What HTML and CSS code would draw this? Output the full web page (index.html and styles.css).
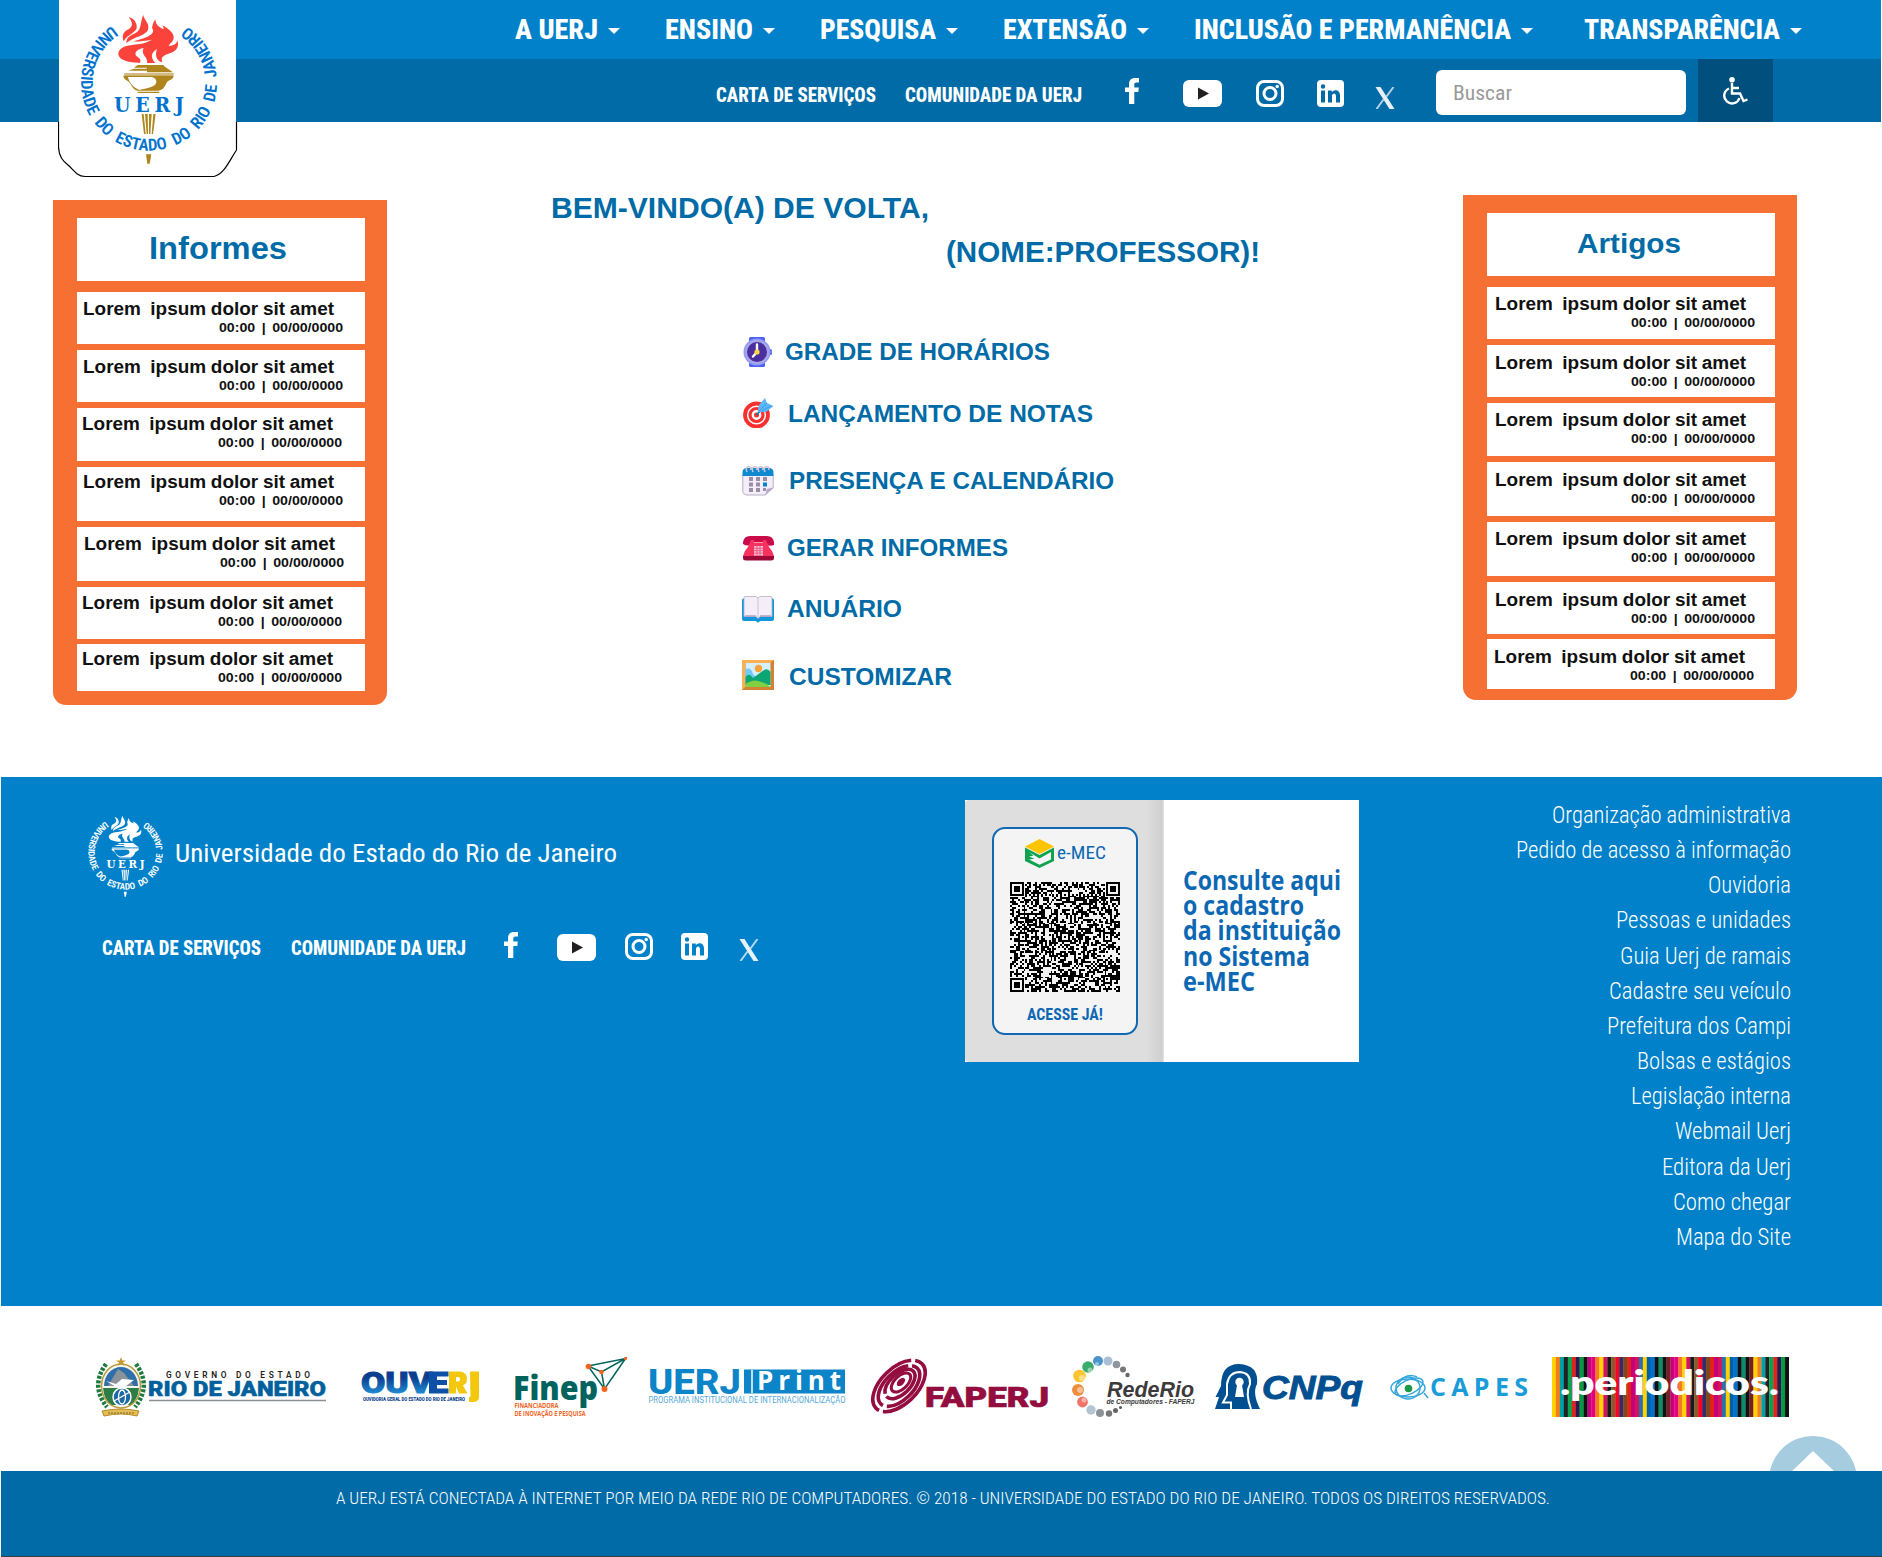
FILE: index.html
```html
<!DOCTYPE html>
<html lang="pt-BR">
<head>
<meta charset="utf-8">
<title>UERJ - Portal do Professor</title>
<link rel="stylesheet" href="styles.css">
</head>
<body>
<svg class="sprite" aria-hidden="true">
  <symbol id="emblem" viewBox="80 12 138 154">
    <path id="ring" d="M112 25.6A68 68 0 1 0 186 25.6" fill="none"/>
    <g transform="scale(.33333)">
      <g class="flame">
        <path d="M386 52C402 54 412 70 410 84C407 98 382 104 371 124C364 104 372 94 386 88C398 80 400 68 386 52Z"/>
        <path d="M430 45C431 58 447 68 445 84C443 108 402 108 379 130C378 110 394 106 408 98C426 88 420 64 430 45Z"/>
        <path d="M466 58C467 70 470 78 490 88C492 84 490 80 486 76C504 84 520 98 521 110C522 126 508 130 506 138C520 138 530 132 532 121C538 140 530 152 514 158C496 164 480 168 487 187C470 184 464 166 471 147C456 156 448 170 466 189L441 189C446 172 420 164 431 144C412 147 398 160 412 170C420 175 424 180 420 189C390 188 354 182 355 160C358 140 384 136 412 133C430 131 444 126 456 119C432 122 412 126 400 124C430 116 472 104 456 84C458 74 460 66 466 58Z"/>
      </g>
      <g class="gold">
        <path d="M413 195H490L497 203H402ZM402 206H440V196H488L519 217H441V212H385Z"/>
        <path d="M372 219H522L519 231H374Z" opacity=".55"/>
        <path fill-rule="evenodd" d="M370 227H521C519 241 503 239 499 250C492 266 486 270 476 272H412C396 268 394 248 382 242C374 238 370 232 370 227ZM384 231C386 244 398 262 418 270C440 264 468 262 469 246C470 236 460 231 452 231Z"/>
        <path d="M415 275H478V279H412Z"/>
        <path d="M425 342H431L437 402H432ZM435 342H443L444 402H440ZM447 342H455L451 402H447ZM460 342H467L459 402H455Z"/>
        <path d="M438 463H454L449 491H442Z"/>
      </g>
    </g>
    <text class="ring-text" font-size="16.500"><textPath href="#ring" textLength="347" lengthAdjust="spacingAndGlyphs">UNIVERSIDADE DO ESTADO DO RIO DE JANEIRO</textPath></text>
    <text class="ring-name" x="114" y="111.500" font-size="21" textLength="70" lengthAdjust="spacing">UERJ</text>
  </symbol>
  <symbol id="fb" viewBox="0 0 14 26"><path d="M4 26V14H0V9.500H4V6.500C4 2 6.500 0 10 0H14V4.500H11.500C9.800 4.500 9.300 5.300 9.300 6.800V9.500H13.800L13.300 14H9.300V26Z" fill="#fff"/></symbol>
  <symbol id="yt" viewBox="0 0 39 27"><rect width="39" height="27" rx="6" fill="#fff"/><path d="M15 7.500L26 13.500L15 19.500Z" fill="#231f20"/></symbol>
  <symbol id="ig" viewBox="0 0 28 27"><rect x="1.500" y="1.500" width="25" height="24" rx="6.500" fill="none" stroke="#fff" stroke-width="3"/><circle cx="14" cy="13.500" r="6" fill="none" stroke="#fff" stroke-width="3"/><circle cx="21.200" cy="6.500" r="1.700" fill="#fff"/></symbol>
  <symbol id="in" viewBox="0 0 27 27"><rect width="27" height="27" rx="4" fill="#fff"/><path class="cut" d="M4 10.500H8V22.500H4ZM6 4.300A2.200 2.200 0 1 1 6 8.700A2.200 2.200 0 1 1 6 4.300ZM11 10.500H14.800V12.300C17 9 23 9.500 23 15.500V22.500H19V16.300C19 12.500 15 12.800 15 16.300V22.500H11Z"/></symbol>
  <symbol id="xx" viewBox="0 0 20 22"><path d="M.5 0H5.500L19.500 22H14.500Z" fill="#fff" opacity=".9"/><path d="M18.500 0L11.500 9.500M8.500 12.500L1.500 22" stroke="#fff" stroke-width="2" opacity=".7"/></symbol>
</svg>

<header class="header">
  <nav class="nav">
    <a class="nav-item"><span data-w="83">A UERJ</span><i class="caret"></i></a>
    <a class="nav-item"><span data-w="88">ENSINO</span><i class="caret"></i></a>
    <a class="nav-item"><span data-w="116">PESQUISA</span><i class="caret"></i></a>
    <a class="nav-item"><span data-w="124">EXTENSÃO</span><i class="caret"></i></a>
    <a class="nav-item"><span data-w="317">INCLUSÃO E PERMANÊNCIA</span><i class="caret"></i></a>
    <a class="nav-item last"><span data-w="196">TRANSPARÊNCIA</span><i class="caret"></i></a>
  </nav>
  <div class="subnav">
    <a class="strong-link"><span data-w="160">CARTA DE SERVIÇOS</span></a>
    <a class="strong-link second"><span data-w="177">COMUNIDADE DA UERJ</span></a>
    <div class="social">
      <svg class="s-fb"><use href="#fb"/></svg>
      <svg class="s-yt"><use href="#yt"/></svg>
      <svg class="s-ig"><use href="#ig"/></svg>
      <svg class="s-in"><use href="#in"/></svg>
      <svg class="s-xx"><use href="#xx"/></svg>
    </div>
    <div class="search"><span data-w="59">Buscar</span></div>
    <div class="access">
      <svg width="26" height="28" viewBox="0 0 26 28" fill="none" stroke="#fff" stroke-width="2.400"><circle cx="10" cy="2.800" r="2.800" fill="#fff" stroke="none"/><path d="M10 6V16.500H18L21.500 24L25.500 22.500M10 11H17"/><path d="M7 11.500A7.800 7.800 0 1 0 17.500 21"/></svg>
    </div>
  </div>
  <div class="logo-card">
    <svg class="card-shape" width="180" height="178" viewBox="0 0 180 178"><path d="M1 0V148C1 156 5 161 10 165C15 169 18 176 27 176.500H156C166 174 170 163 178 150V0Z" fill="#fff"/><path d="M.5 122V147C1 157 5 161 10 165C15 169 18 176 27 176.500H156C166 174 170 163 178.500 150V122" fill="none" stroke="#000" stroke-width="1.200"/></svg>
    <svg class="emblem"><use href="#emblem"/></svg>
  </div>
</header>

<main class="main">
  <section class="board informes">
    <h2><span data-w="138">Informes</span></h2>
    <article><p><span data-w="251">Lorem  ipsum dolor sit amet</span></p><time><span data-w="124">00:00  |  00/00/0000</span></time></article>
    <article><p><span data-w="251">Lorem  ipsum dolor sit amet</span></p><time><span data-w="124">00:00  |  00/00/0000</span></time></article>
    <article><p><span data-w="251">Lorem  ipsum dolor sit amet</span></p><time><span data-w="124">00:00  |  00/00/0000</span></time></article>
    <article><p><span data-w="251">Lorem  ipsum dolor sit amet</span></p><time><span data-w="124">00:00  |  00/00/0000</span></time></article>
    <article><p><span data-w="251">Lorem  ipsum dolor sit amet</span></p><time><span data-w="124">00:00  |  00/00/0000</span></time></article>
    <article><p><span data-w="251">Lorem  ipsum dolor sit amet</span></p><time><span data-w="124">00:00  |  00/00/0000</span></time></article>
    <article><p><span data-w="251">Lorem  ipsum dolor sit amet</span></p><time><span data-w="124">00:00  |  00/00/0000</span></time></article>
  </section>

  <section class="welcome">
    <h1><span data-w="378">BEM-VINDO(A) DE VOLTA,</span></h1>
    <h1 class="who"><span data-w="314">(NOME:PROFESSOR)!</span></h1>
    <ul class="menu">
      <li><svg viewBox="0 0 32 30"><rect x="7" y="0" width="16" height="30" rx="1.500" fill="#4d63f5"/><rect x="26" y="12" width="4" height="6" rx="1.500" fill="#5a6cf0"/><circle cx="15" cy="15" r="13.500" fill="#8f9cf4"/><circle cx="15" cy="15" r="12" fill="#a9a5e8"/><circle cx="15" cy="15" r="10" fill="#4b2fa0"/><path d="M15 7.500V15L11 19.500" stroke="#fff" stroke-width="2.400" fill="none" stroke-linecap="round"/><circle cx="15" cy="15" r="2.600" fill="#fcd53f"/></svg><span data-w="265">GRADE DE HORÁRIOS</span></li>
      <li><svg viewBox="0 0 32 30"><circle cx="14.500" cy="17" r="11.500" fill="#fff" stroke="#f8312f" stroke-width="3.800"/><circle cx="14.500" cy="17" r="6.500" fill="none" stroke="#f8312f" stroke-width="3.200"/><circle cx="14.500" cy="17" r="2.500" fill="#f8312f"/><path d="M14.500 17L21 10" stroke="#0074ba" stroke-width="1.500"/><path d="M15.500 14L17 7L23 0L25 5L31.500 8L24 14Z" fill="#5ab8fa"/><path d="M17 13L25 5M19.500 13L29 8" stroke="#3a9df0"/></svg><span data-w="305">LANÇAMENTO DE NOTAS</span></li>
      <li><svg viewBox="0 0 32 30"><path d="M.8 9V25A4 4 0 0 0 5 29H23L31.200 22V9Z" fill="#f3eef8" stroke="#b8afc4"/><path d="M.5 10V6A4 4 0 0 1 5 2H27A4 4 0 0 1 31.500 6V10Z" fill="#1089cf"/><path d="M23 29.500L25 23L31.200 21.500Z" fill="#b8a9cc"/><g fill="#998ea4"><path d="M7 11h4v4H7zM14 11h4v4h-4zM21 11h4v4h-4zM7 16.500h4v4H7zM14 16.500h4v4h-4zM7 22h4v4H7zM14 22h4v4h-4zM21 22h3v3h-3z"/></g><path d="M21 16.500h4v4h-4z" fill="#0084ce"/><path d="M5 6Q3 1 6.500 .8T8.500 4M11 6Q9 1 12.500 .8T14.500 4M17 6Q15 1 18.500 .8T20.500 4M23 6Q21 1 24.500 .8T26.500 4" fill="none" stroke="#cdc4d6" stroke-width="1.500"/></svg><span data-w="325">PRESENÇA E CALENDÁRIO</span></li>
      <li><svg viewBox="0 0 32 30"><path d="M1 11V9Q2 3 8 3H25Q31 3 32 9V12Q28 13.500 25 12L23 9H10L8 12Q5 13.500 1 11Z" fill="#ca0b4a"/><path d="M9 7H12V9.500H21V7H24L27 14Q31 18 32 23H1Q2 18 6 14Z" fill="#f8315f"/><path d="M1 23H32V25Q32 27.500 29 27.500H4Q1 27.500 1 25Z" fill="#9c0838"/><path d="M12 13h9v9.500h-9z" fill="#e9c4dc"/><path d="M12 15.300h9M12 17.700h9M12 20.100h9M15 13v9.500M18 13v9.500" stroke="#f8315f" stroke-width=".7"/></svg><span data-w="221">GERAR INFORMES</span></li>
      <li><svg viewBox="0 0 32 30"><path d="M0 6Q0 4.500 1.500 4.500H30.500Q32 4.500 32 6V25Q32 27 30 27H18Q16 30 14 27H2Q0 27 0 25Z" fill="#1496dc"/><path d="M2 3Q3 2.500 4 2.500H14L16 4L18 2.500H29Q30 2.500 30 4V22.500H18L16 24.500L14 22.500H2Z" fill="#f3eef8" stroke="#b7acc9" stroke-width=".8"/><path d="M3 22H14M18 22H29" stroke="#b1a2c5" stroke-width="1.300"/><path d="M16 4V23.500" stroke="#cfc4dc"/></svg><span data-w="115">ANUÁRIO</span></li>
      <li><svg viewBox="0 0 32 30"><rect width="32" height="30" fill="#d08333"/><path d="M0 0H32L28 3H3V27L0 30Z" fill="#fbb054"/><rect x="3.500" y="3" width="25" height="24" fill="#d4f0fb"/><path d="M3.500 9Q9 7 11 14L16 19L3.500 20Z" fill="#70c8fb"/><circle cx="16.500" cy="8.500" r="3.700" fill="#f9a23b"/><path d="M3.500 17Q7 12 11 18L22 10Q26 8 28.500 12V25H3.500Z" fill="#0ca574"/><path d="M3.500 27V24Q12 18 19 22Q25 23 28.500 27Z" fill="#83cf42"/></svg><span data-w="163">CUSTOMIZAR</span></li>
    </ul>
  </section>

  <section class="board artigos">
    <h2><span data-w="104">Artigos</span></h2>
    <article><p><span data-w="251">Lorem  ipsum dolor sit amet</span></p><time><span data-w="124">00:00  |  00/00/0000</span></time></article>
    <article><p><span data-w="251">Lorem  ipsum dolor sit amet</span></p><time><span data-w="124">00:00  |  00/00/0000</span></time></article>
    <article><p><span data-w="251">Lorem  ipsum dolor sit amet</span></p><time><span data-w="124">00:00  |  00/00/0000</span></time></article>
    <article><p><span data-w="251">Lorem  ipsum dolor sit amet</span></p><time><span data-w="124">00:00  |  00/00/0000</span></time></article>
    <article><p><span data-w="251">Lorem  ipsum dolor sit amet</span></p><time><span data-w="124">00:00  |  00/00/0000</span></time></article>
    <article><p><span data-w="251">Lorem  ipsum dolor sit amet</span></p><time><span data-w="124">00:00  |  00/00/0000</span></time></article>
    <article><p><span data-w="251">Lorem  ipsum dolor sit amet</span></p><time><span data-w="124">00:00  |  00/00/0000</span></time></article>
  </section>
</main>

<footer class="footer">
  <div class="about">
    <div class="brand">
      <svg class="emblem small"><use href="#emblem"/></svg>
      <span data-w="442">Universidade do Estado do Rio de Janeiro</span>
    </div>
    <div class="about-links">
      <a class="strong-link"><span data-w="159">CARTA DE SERVIÇOS</span></a>
      <a class="strong-link second"><span data-w="175">COMUNIDADE DA UERJ</span></a>
      <div class="social">
        <svg class="s-fb"><use href="#fb"/></svg>
        <svg class="s-yt"><use href="#yt"/></svg>
        <svg class="s-ig"><use href="#ig"/></svg>
        <svg class="s-in"><use href="#in"/></svg>
        <svg class="s-xx"><use href="#xx"/></svg>
      </div>
    </div>
  </div>
  <div class="emec">
    <div class="emec-left">
      <div class="emec-card">
        <div class="emec-logo">
          <svg width="29" height="29" viewBox="0 0 29 29"><path d="M0 7.500L14.500 0L29 7.500L14.500 15Z" fill="#fdc400"/><path d="M0 8.500L14.500 16L29 8.500V22L14.500 29L0 22Z" fill="#0fa24f"/><path d="M4 12L9 14.800L6.500 16L10 18L7 19L14.500 23L26 17V20L14.500 26L4 20.500Z" fill="#0fa24f"/><path d="M4 13L14.500 19.500L26 13V20.500L14.500 25.800L4 20.500L9.500 19.800L4 17.500L8.500 16.800Z" fill="#f4f4f4"/></svg>
          <span data-w="49">e-MEC</span>
        </div>
        <svg class="qr" id="qr" viewBox="0 0 57 57" shape-rendering="crispEdges"></svg>
        <b><span data-w="76">ACESSE JÁ!</span></b>
      </div>
    </div>
    <div class="emec-right">
      <span data-w="158">Consulte aqui</span><span data-w="121">o cadastro</span><span data-w="158">da instituição</span><span data-w="127">no Sistema</span><span data-w="72">e-MEC</span>
    </div>
  </div>
  <ul class="links">
    <li><span data-w="239">Organização administrativa</span></li>
    <li><span data-w="275">Pedido de acesso à informação</span></li>
    <li><span data-w="83">Ouvidoria</span></li>
    <li><span data-w="175">Pessoas e unidades</span></li>
    <li><span data-w="171">Guia Uerj de ramais</span></li>
    <li><span data-w="182">Cadastre seu veículo</span></li>
    <li><span data-w="184">Prefeitura dos Campi</span></li>
    <li><span data-w="154">Bolsas e estágios</span></li>
    <li><span data-w="160">Legislação interna</span></li>
    <li><span data-w="116">Webmail Uerj</span></li>
    <li><span data-w="129">Editora da Uerj</span></li>
    <li><span data-w="118">Como chegar</span></li>
    <li><span data-w="115">Mapa do Site</span></li>
  </ul>
</footer>

<section class="partners">
  <svg class="partner" width="232" height="62" viewBox="96 1356 232 62">
    <path d="M106 1364Q90 1386 107 1407M136 1364Q152 1386 135 1407" fill="none" stroke="#1f7a3d" stroke-width="4.500" stroke-dasharray="3 1.500"/>
    <ellipse cx="121" cy="1386" rx="19.500" ry="22" fill="#f5f5f0" stroke="#b99a3c" stroke-width="1.500"/>
    <path d="M104 1386A17 19 0 0 1 138 1386Z" fill="#2f6ea8"/><path d="M108 1386L118 1369L124 1373L134 1386Z" fill="#8b9299"/><path d="M103 1388H139Q138 1400 130 1405H112Q104 1400 103 1388Z" fill="#2c7d46"/><path d="M106 1381L116 1384L122 1379L134 1380L126 1386L118 1388Z" fill="#fff"/>
    <circle cx="122" cy="1397" r="9" fill="#1d69a6" stroke="#fff" stroke-width="1.500"/><ellipse cx="122" cy="1397" rx="3.500" ry="7" fill="none" stroke="#fff" stroke-width="1.300"/><path d="M114 1401L130 1392" stroke="#fff" stroke-width="1.300"/>
    <path d="M121 1357L122.300 1360.500H126L123 1362.500L124 1366L121 1364L118 1366L119 1362.500L116 1360.500H119.700Z" fill="#c89a2e"/>
    <path d="M102 1411Q121 1407 139 1411L137 1416Q121 1412 104 1416Z" fill="#e3bd55" stroke="#b98a27"/>
    <path d="M108 1413H134" stroke="#7f641f" stroke-dasharray="2 1"/>
    <text x="166" y="1378" font-size="8.300" fill="#222" font-weight="600" textLength="144">GOVERNO DO ESTADO</text>
    <text x="148" y="1396.300" font-size="20.500" font-weight="900" fill="#00609c" stroke="#00609c" stroke-width=".5" textLength="178" lengthAdjust="spacingAndGlyphs">RIO DE JANEIRO</text>
    <path d="M149 1400.500H326" stroke="#8a8f94" stroke-width="1.500"/>
  </svg>
  <svg class="partner" width="122" height="62" viewBox="360 1356 122 62">
    <defs><linearGradient id="ouv" x2="0" y2="1"><stop offset=".35" stop-color="#0a3f90"/><stop offset=".8" stop-color="#1f8ad2"/></linearGradient></defs>
    <text x="361" y="1393" font-size="29.500" font-weight="900" fill="url(#ouv)" stroke="url(#ouv)" textLength="71" lengthAdjust="spacingAndGlyphs">OUV</text>
    <path d="M429 1371.500H448.500V1376.500H437V1380H447V1385H437V1388.500H448.500V1393.500H429Z" fill="#0d50a5"/>
    <path fill-rule="evenodd" d="M449 1371.500H460Q467 1372 467 1379Q467 1383.500 463 1385.500L467.500 1393.500H459L456 1386.500V1393.500H449ZM456 1377V1381.500H459Q461 1379 459 1377ZM470 1371.500H479V1398Q478 1402 473 1402H469V1397H470.500Z" fill="#f3c80c"/>
    <text x="363" y="1400.500" font-size="4.500" font-weight="900" fill="#0d3f8c" textLength="102" lengthAdjust="spacingAndGlyphs">OUVIDORIA GERAL DO ESTADO DO RIO DE JANEIRO</text>
  </svg>
  <svg class="partner" width="114" height="62" viewBox="514 1356 114 62">
    <text x="513" y="1400" font-size="34" font-weight="800" font-family="Open Sans, sans-serif" fill="#00635d" textLength="85" lengthAdjust="spacingAndGlyphs">Finep</text>
    <path d="M588 1366L625.500 1358.500L604.500 1389ZM588 1366L601.500 1372L625.500 1358.500M601.500 1372L604.500 1389" fill="none" stroke="#00635d" stroke-width="1.500"/>
    <g fill="#f26322"><circle cx="588.500" cy="1366.500" r="2.800"/><circle cx="601.500" cy="1372" r="2.300"/><circle cx="625.500" cy="1358.500" r="1.700"/><circle cx="604.500" cy="1389" r="3"/></g>
    <g font-size="6.500" fill="#f26322" font-family="Open Sans, sans-serif" font-weight="700"><text x="514.500" y="1408" textLength="44" lengthAdjust="spacingAndGlyphs">FINANCIADORA</text><text x="514.500" y="1415.500" textLength="71" lengthAdjust="spacingAndGlyphs">DE INOVAÇÃO E PESQUISA</text></g>
  </svg>
  <svg class="partner" width="198" height="62" viewBox="648 1356 198 62">
    <text x="648" y="1393.500" font-size="34.500" font-weight="800" fill="#0b84c8" textLength="93" lengthAdjust="spacingAndGlyphs">UERJ</text>
    <path d="M744 1369.500H845V1393.500H744Z" fill="#0b84c8"/>
    <text x="757" y="1390" font-size="26" font-weight="700" font-family="Open Sans, sans-serif" fill="#fff" textLength="84" lengthAdjust="spacing">Print</text>
    <path d="M752 1370V1393" stroke="#fff" stroke-width="1.500"/>
    <text x="648.500" y="1403" font-size="8.800" fill="#58a9d8" textLength="197" lengthAdjust="spacingAndGlyphs">PROGRAMA INSTITUCIONAL DE INTERNACIONALIZAÇÃO</text>
  </svg>
  <svg class="partner" width="182" height="62" viewBox="869 1356 182 62">
    <g fill="none" stroke="#930d3f" stroke-width="3.600"><ellipse cx="899" cy="1386" rx="32" ry="18" transform="rotate(-44 899 1386)" stroke-dasharray="72 4"/><ellipse cx="899" cy="1386" rx="25.500" ry="14" transform="rotate(-44 899 1386)" stroke-dasharray="56 4"/><ellipse cx="900" cy="1384" rx="18.500" ry="10" transform="rotate(-44 900 1384)" stroke-dasharray="46 3"/><ellipse cx="901" cy="1382.500" rx="12" ry="6.500" transform="rotate(-44 901 1382.500)" stroke-width="3"/></g><ellipse cx="901" cy="1382" rx="5" ry="3" transform="rotate(-44 901 1382)" fill="#930d3f"/>
    <path d="M926 1384H1050V1408H926Z" fill="#fff"/>
    <text x="925" y="1406.500" font-size="28.500" font-weight="900" fill="#930d3f" stroke="#930d3f" stroke-width=".7" textLength="124" lengthAdjust="spacingAndGlyphs">FAPERJ</text>
  </svg>
  <svg class="partner" width="124" height="62" viewBox="1072 1356 124 62">
    <g><circle cx="1098" cy="1361" r="5" fill="#4c93c9"/><circle cx="1088" cy="1367" r="5.800" fill="#3bab6d"/><circle cx="1079.500" cy="1376" r="6.300" fill="#fbc52f"/><circle cx="1078" cy="1390" r="6" fill="#ee8d3c"/><circle cx="1082.500" cy="1402" r="5.400" fill="#ee7567"/><circle cx="1091" cy="1410" r="4.700" fill="#b5c4d3"/><circle cx="1100" cy="1413" r="4" fill="#8d9499"/><circle cx="1109" cy="1413.500" r="3.200" fill="#777"/><circle cx="1115.500" cy="1410.500" r="2.500" fill="#666"/><circle cx="1120.500" cy="1407.500" r="1.500" fill="#555"/><circle cx="1108" cy="1361" r="4.500" fill="#a9bfd3"/><circle cx="1116.500" cy="1364.500" r="3.800" fill="#8d969e"/><circle cx="1123" cy="1369.500" r="3" fill="#777"/><circle cx="1127.500" cy="1375" r="2.200" fill="#666"/></g>
    <g fill="#fff" opacity=".45"><circle cx="1097" cy="1364" r="2"/><circle cx="1090" cy="1370" r="2.500"/><circle cx="1082" cy="1378" r="3"/><circle cx="1080" cy="1390" r="3"/><circle cx="1084" cy="1400" r="2.500"/></g>
    <g fill="#3c3a3b" font-style="italic" font-weight="700" font-family="Liberation Sans, sans-serif"><text x="1107" y="1396.500" font-size="22.500" textLength="87" lengthAdjust="spacingAndGlyphs">RedeRio</text><text x="1106.500" y="1404" font-size="7.200" textLength="88" lengthAdjust="spacingAndGlyphs">de Computadores - FAPERJ</text></g>
  </svg>
  <svg class="partner" width="152" height="62" viewBox="1214 1356 152 62">
    <path d="M1215 1409L1219 1397L1215.500 1397L1221 1386Q1221 1364 1239 1364Q1259 1365 1257 1384Q1252 1393 1260 1409Z" fill="#004f91"/>
    <path d="M1231 1409V1402.500H1223L1227 1395V1384Q1229 1372 1240 1372Q1251 1373 1250 1384Q1245 1393 1251 1409" fill="none" stroke="#fff" stroke-width="2"/><circle cx="1239.500" cy="1382" r="4.200" fill="#fff"/><path d="M1237 1385H1242L1244 1397H1235Z" fill="#fff"/>
    <text x="1262" y="1399" font-size="34" font-style="italic" font-weight="700" font-family="Liberation Sans, sans-serif" fill="#004f91" stroke="#004f91" textLength="101" lengthAdjust="spacingAndGlyphs">CNPq</text>
  </svg>
  <svg class="partner" width="140" height="62" viewBox="1389 1356 140 62">
    <g fill="none" stroke="#35a7dd" stroke-width="1.500"><ellipse cx="1408" cy="1388" rx="17" ry="9"/><ellipse cx="1409" cy="1387" rx="15" ry="7" transform="rotate(-25 1409 1387)"/><ellipse cx="1408" cy="1388" rx="12" ry="11"/><path d="M1398 1384Q1406 1372 1417 1377M1424 1393L1428 1398"/></g><circle cx="1408.500" cy="1388.500" r="3.800" fill="#1a9a49"/>
    <text x="1430" y="1396" font-size="25" font-weight="700" font-family="Open Sans, sans-serif" fill="#199cd8" textLength="98">CAPES</text>
  </svg>
  <svg class="partner" width="237" height="60" viewBox="0 0 237 60">
    <g id="stripes"></g>
    <text x="8" y="37.500" font-size="34" font-weight="800" font-family="Lato, sans-serif" fill="#fff" textLength="219" lengthAdjust="spacingAndGlyphs">.periodicos.</text>
  </svg>
  <svg class="to-top" width="88" height="35" viewBox="0 0 88 35"><circle cx="44" cy="44" r="44" fill="#a6cce0"/><path d="M44 15L66 36H22Z" fill="#fff"/></svg>
</section>

<div class="copyright"><span data-w="1214">A UERJ ESTÁ CONECTADA À INTERNET POR MEIO DA REDE RIO DE COMPUTADORES. © 2018 - UNIVERSIDADE DO ESTADO DO RIO DE JANEIRO. TODOS OS DIREITOS RESERVADOS.</span></div>
<script src="page.js"></script>
</body>
</html>
```
FILE: styles.css
```css
* { box-sizing: border-box; }
html, body { margin: 0; padding: 0; }
body {
  width: 1882px;
  height: 1557px;
  overflow: hidden;
  background: #fff;
  color: #fff;
  font-family: "Roboto Condensed", Roboto, sans-serif;
  font-stretch: 75%;
}
ul, h1, h2, p { margin: 0; padding: 0; list-style: none; }
svg { display: block; flex: none; }
.sprite { position: absolute; width: 0; height: 0; }
[data-w] { display: inline-block; white-space: pre; transform-origin: 0 50%; flex: none; }

/* emblem */
.emblem { --flame: #fc433b; --gold: #af851d; --ink: #0072ce; width: 138px; height: 154px; }
.emblem.small { --flame: #fff; --gold: #fff; --ink: #fff; width: 77px; height: 84px; }
.flame { fill: var(--flame); }
.gold { fill: var(--gold); }
.ring-text { fill: var(--ink); font-family: "Roboto Condensed", Roboto, sans-serif; font-weight: 600; word-spacing: 4px; }
.ring-name { fill: var(--ink); font-family: "DejaVu Serif", serif; font-weight: 700; font-stretch: 75%; }

/* header */
.header { width: 1881px; height: 122px; position: relative; }
.nav {
  height: 59px;
  padding-left: 515px;
  display: flex;
  gap: 45px;
  background: #0081c9;
  font-size: 28px;
  line-height: 58px;
  font-weight: 800;
}
.nav-item { display: flex; align-items: center; gap: 10px; flex: none; }
.nav-item.last { margin-left: 6px; }
.caret { border: 6px solid transparent; border-top-color: #fff; border-bottom: 0; margin-top: 3px; }
.subnav {
  height: 63px;
  padding-left: 716px;
  display: flex;
  align-items: flex-start;
  background: #006ba6;
  --bar: #006ba6;
}
.strong-link { font-size: 20px; font-weight: 800; line-height: 30px; padding-top: 21px; }
.strong-link.second { margin-left: 29px; }
.social { display: flex; align-items: flex-start; padding-top: 19px; margin-left: 43px; }
.s-fb { width: 14px; height: 26px; }
.s-yt { width: 39px; height: 27px; margin: 2px 0 0 44px; }
.s-ig { width: 28px; height: 27px; margin: 2px 0 0 34px; }
.s-in { width: 27px; height: 27px; margin: 2px 0 0 33px; }
.s-xx { width: 20px; height: 22px; margin: 9px 0 0 31px; }
.cut { fill: var(--bar); }
.search {
  width: 250px;
  height: 45px;
  margin: 11px 0 0 41px;
  padding-left: 17px;
  border-radius: 6px;
  background: #fff;
  color: #999;
  font-size: 20px;
  line-height: 46px;
}
.access { width: 75px; height: 63px; margin-left: 12px; padding: 18px 0 0 24px; background: #004f7c; }
.logo-card { position: absolute; left: 58px; top: 0; width: 180px; height: 178px; padding: 12px 0 0 22px; }
.card-shape { position: absolute; left: 0; top: 0; }
.logo-card .emblem { position: relative; }

/* boards */
.main { height: 655px; display: flex; align-items: flex-start; }
.board {
  width: 334px;
  height: 505px;
  padding: 18px 22px 0 24px;
  display: grid;
  align-content: start;
  row-gap: 6px;
  background: #f57032;
  border-radius: 0 0 13px 13px;
  font-family: "Liberation Sans", sans-serif;
  font-stretch: normal;
  font-weight: 700;
}
.informes { margin: 78px 0 0 53px; grid-template-rows: 68px 52px 52px 53px 54px 54px 52px 47px; }
.artigos { margin: 73px 0 0 204px; grid-template-rows: 68px 52px 52px 53px 54px 54px 52px 50px; }
.board h2 { height: 63px; background: #fff; color: #006ba6; font-size: 31px; line-height: 62px; padding-left: 72px; }
.artigos h2 { font-size: 28px; padding-left: 90px; }
.board article { background: #fff; color: #111; padding: 7px 0 0 6px; }
.board article:last-child { margin-top: -1px; margin-bottom: 1px; }
.board p { font-size: 18px; line-height: 20px; word-spacing: -.5px; }
.board time { display: block; margin: 1px 0 0 136px; font-size: 13px; line-height: 16px; word-spacing: -.6px; }
.informes article:nth-child(4) { padding: 6px 0 0 5px; }
.informes article:nth-child(5) { padding-top: 5px; }
.informes article:nth-child(6) { padding-left: 7px; }
.informes article:nth-child(7) { padding: 6px 0 0 5px; }
.informes article:nth-child(8) { padding: 5px 0 0 5px; }
.artigos article { padding: 7px 0 0 8px; }
.artigos article:nth-child(3), .artigos article:nth-child(5), .artigos article:nth-child(7) { padding-top: 8px; }
.artigos article:nth-child(8) { padding: 8px 0 0 7px; }

/* welcome */
.welcome { width: 708px; margin: 66px 0 0 164px; color: #006ba6; font-family: "Liberation Sans", sans-serif; font-stretch: normal; font-weight: 700; }
.welcome h1 { font-size: 29px; line-height: 40px; height: 44px; }
.welcome h1.who { padding-left: 395px; height: 75px; }
.menu { padding: 30px 0 0 191px; }
.menu li { display: flex; align-items: flex-start; font-size: 24px; line-height: 30px; height: 62px; }
.menu svg { width: 32px; height: 30px; }
.menu span { margin-left: 11px; }
.menu li:nth-child(1) { height: 61px; }
.menu li:nth-child(2) { height: 68px; }
.menu li:nth-child(2) span { margin: 1px 0 0 14px; }
.menu li:nth-child(3) { height: 67px; }
.menu li:nth-child(3) span { margin-left: 15px; }
.menu li:nth-child(4) { height: 61px; }
.menu li:nth-child(4) span { margin-left: 13px; }
.menu li:nth-child(5) { height: 66px; }
.menu li:nth-child(5) span { margin-left: 13px; }
.menu li:nth-child(6) span { margin: 2px 0 0 15px; }

/* footer */
.footer { height: 529px; margin-left: 1px; display: flex; align-items: flex-start; background: #0081c9; --bar: #0081c9; }
.about { width: 877px; margin-left: 86px; padding-top: 37px; flex: none; }
.brand { display: flex; align-items: flex-start; font-size: 26.500px; line-height: 40px; }
.brand span { margin: 19px 0 0 11px; }
.about-links { display: flex; align-items: flex-start; padding: 14px 0 0 15px; }
.about-links .strong-link { font-size: 19.500px; padding-top: 22px; }
.about-links .second { margin-left: 30px; }
.about-links .social { padding-top: 20px; margin-left: 38px; }
.about-links .s-yt { margin: 2px 0 0 39px; }
.about-links .s-ig { margin: 1px 0 0 29px; }
.about-links .s-in { margin: 1px 0 0 28px; }
.about-links .s-xx { margin: 7px 0 0 31px; }

.emec { width: 394px; height: 262px; margin: 23px 0 0 1px; display: flex; background: #fff; flex: none; color: #0d68b3; }
.emec-left { width: 199px; padding: 27px 0 0 27px; background: linear-gradient(90deg, #dedede 91%, #cfcfcf 99%, #e6e6e6); border-radius: 4px 0 0 4px; }
.emec-card { width: 146px; height: 208px; border: 2px solid #1268b0; border-radius: 13px; background: #f4f4f4; display: flex; flex-direction: column; align-items: center; }
.emec-logo { display: flex; gap: 3px; height: 29px; margin: 10px 0 14px; font-size: 19px; line-height: 28px; }
.qr { width: 110px; height: 110px; }
.emec-card b { font-size: 16px; line-height: 20px; margin-top: 13px; }
.emec-right { display: flex; flex-direction: column; padding: 68px 0 0 19px; align-items: flex-start; font: 700 26.500px/25.200px "Open Sans", "Noto Sans", sans-serif; }

.links { flex: 1; padding: 21px 91px 0 0; display: flex; flex-direction: column; align-items: flex-end; font-size: 24px; font-weight: 300; line-height: 35.170px; }
.links li { height: 35.170px; }

/* partners */
.partners { position: relative; height: 165px; padding: 50px 0 0 96px; display: flex; align-items: flex-start; font-family: Roboto, sans-serif; font-stretch: normal; }
.partner:nth-child(2) { margin-left: 32px; }
.partner:nth-child(3) { margin-left: 32px; }
.partner:nth-child(4) { margin-left: 20px; }
.partner:nth-child(5) { margin-left: 23px; }
.partner:nth-child(6) { margin-left: 21px; }
.partner:nth-child(7) { margin-left: 18px; }
.partner:nth-child(8) { margin-left: 23px; }
.partner:nth-child(9) { margin: 1px 0 0 23px; }
.to-top { position: absolute; left: 1769px; bottom: 0; }

.copyright { height: 86px; margin-left: 1px; padding: 16px 0 0 335px; background: #006ba6; border-bottom: 1px solid #33404a; font-size: 17px; font-weight: 300; line-height: 22px; }
```
FILE: page.js
```js
// Condense each label horizontally to its column width.
document.querySelectorAll('[data-w]').forEach(function (el) {
  var target = Number(el.dataset.w);
  var natural = el.getBoundingClientRect().width;
  el.style.transform = 'scaleX(' + target / natural + ')';
  el.style.width = target + 'px';
});

// QR code modules: finders, alignment marks, timing lines and data.
(function () {
  var n = 57, seed = 20180, d = '';
  function rnd() { seed = (seed * 1103515245 + 12345) % 2147483648; return seed / 2147483648; }
  function ring(x, y, cx, cy, r) {
    var k = Math.max(Math.abs(x - cx), Math.abs(y - cy));
    return k > r ? null : k;
  }
  var finders = [[3, 3], [53, 3], [3, 53]];
  var marks = [[28, 6], [6, 28], [28, 28], [50, 28], [28, 50], [50, 50]];
  for (var y = 0; y < n; y++) {
    for (var x = 0; x < n; x++) {
      var on = rnd() < 0.52, k;
      if (x === 6) on = y % 2 === 0;
      if (y === 6) on = x % 2 === 0;
      marks.forEach(function (m) { k = ring(x, y, m[0], m[1], 2); if (k !== null) on = k !== 1; });
      finders.forEach(function (m) { k = ring(x, y, m[0], m[1], 4); if (k !== null) on = k < 2 || k === 3; });
      if (on) d += 'M' + x + ' ' + y + 'h1v1h-1z';
    }
  }
  document.getElementById('qr').innerHTML = '<path d="' + d + '"/>';
})();

// Coloured bars behind the periodicos wordmark.
(function () {
  var c = ['#ffd200', '#d4145a', '#111', '#c4007a', '#2a6fb0', '#e2231a', '#7a4a1e', '#f47b20', '#1a1a1a', '#0a8f6a', '#e5007d', '#ffd200', '#2b1a4f', '#e2231a', '#00a0a8', '#8a5a2b', '#111', '#f47b20', '#0061a8', '#009a44', '#c4007a', '#222', '#ff0022', '#7a1f1f', '#ffd200', '#0072ce', '#111', '#d4145a', '#00a651', '#3a2a6a'];
  var out = '', w = 237 / 60;
  for (var i = 0; i < 60; i++) out += '<rect x="' + i * w + '" width="' + (w + 0.2) + '" height="60" fill="' + c[(i * 7 + (i / 30 | 0) * 3) % 30] + '"/>';
  document.getElementById('stripes').innerHTML = out;
})();
```
